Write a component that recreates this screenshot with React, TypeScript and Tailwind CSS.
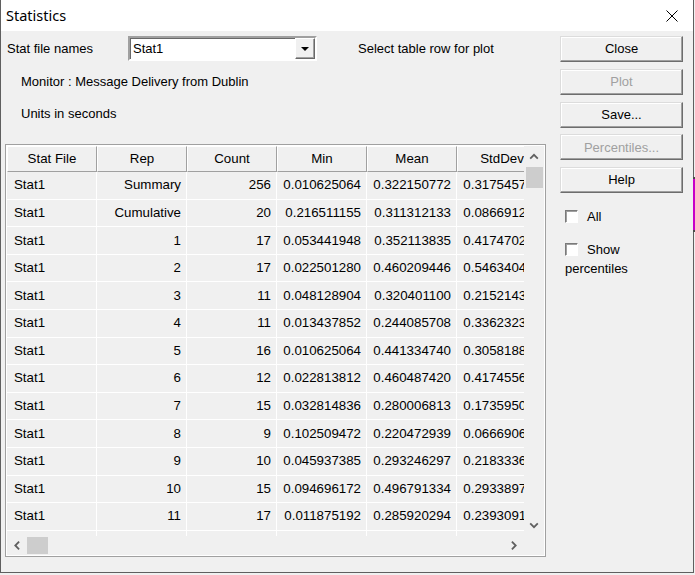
import type { ReactNode } from "react";

type Row = { file: string; rep: string; count: string; min: string; mean: string; std: string };

const rows: Row[] = [
  { file: "Stat1", rep: "Summary", count: "256", min: "0.010625064", mean: "0.322150772", std: "0.317545700" },
  { file: "Stat1", rep: "Cumulative", count: "20", min: "0.216511155", mean: "0.311312133", std: "0.086691200" },
  { file: "Stat1", rep: "1", count: "17", min: "0.053441948", mean: "0.352113835", std: "0.417470200" },
  { file: "Stat1", rep: "2", count: "17", min: "0.022501280", mean: "0.460209446", std: "0.546340400" },
  { file: "Stat1", rep: "3", count: "11", min: "0.048128904", mean: "0.320401100", std: "0.215214300" },
  { file: "Stat1", rep: "4", count: "11", min: "0.013437852", mean: "0.244085708", std: "0.336232300" },
  { file: "Stat1", rep: "5", count: "16", min: "0.010625064", mean: "0.441334740", std: "0.305818800" },
  { file: "Stat1", rep: "6", count: "12", min: "0.022813812", mean: "0.460487420", std: "0.417455600" },
  { file: "Stat1", rep: "7", count: "15", min: "0.032814836", mean: "0.280006813", std: "0.173595000" },
  { file: "Stat1", rep: "8", count: "9", min: "0.102509472", mean: "0.220472939", std: "0.066690600" },
  { file: "Stat1", rep: "9", count: "10", min: "0.045937385", mean: "0.293246297", std: "0.218333600" },
  { file: "Stat1", rep: "10", count: "15", min: "0.094696172", mean: "0.496791334", std: "0.293389700" },
  { file: "Stat1", rep: "11", count: "17", min: "0.011875192", mean: "0.285920294", std: "0.239309100" },
  { file: "", rep: "", count: "", min: "", mean: "", std: "" },
];

const headers = ["Stat File", "Rep", "Count", "Min", "Mean", "StdDev"];

function Chevron({ dir }: { dir: "up" | "down" | "left" | "right" }) {
  const rot = { up: "rotate-0", down: "rotate-180", left: "-rotate-90", right: "rotate-90" }[dir];
  return (
    <svg width="10" height="7" viewBox="0 0 10 7" className={rot}>
      <path d="M1.2 5.6 L5 1.8 L8.8 5.6" fill="none" stroke="#606060" strokeWidth="1.8" />
    </svg>
  );
}

function WinButton({ children, disabled }: { children: ReactNode; disabled?: boolean }) {
  return (
    <button
      type="button"
      className={`flex h-[26px] w-[123px] items-center justify-center border border-t-[#dcdcdc] border-l-[#dcdcdc] border-r-[#6d6d6d] border-b-[#6d6d6d] bg-[#f0f0f0] shadow-[inset_-1px_-1px_0_#a0a0a0,inset_1px_1px_0_#ffffff] ${
        disabled ? "text-[#a0a0a0]" : "text-black"
      }`}
    >
      {children}
    </button>
  );
}

function CheckBox() {
  return (
    <span className="block h-[13px] w-[13px] border border-t-[#7a7a7a] border-l-[#7a7a7a] border-r-white border-b-white bg-white shadow-[inset_1px_1px_0_#a0a0a0]" />
  );
}

const cell = "flex w-[90px] shrink-0 items-center border-r border-b border-white bg-[#f0f0f0]";

function DataTable() {
  return (
    <div className="ml-[-2px] mt-[22px] w-[541px] border border-[#a0a0a0] bg-white p-px">
      <div className="flex">
        <div className="flex w-[517px] flex-col">
          <div className="h-[390px] overflow-hidden text-[13.3px]">
            <div className="w-[540px]">
              <div className="flex h-[26px]">
                {headers.map((h) => (
                  <div
                    key={h}
                    className="flex h-[26px] w-[90px] shrink-0 items-center justify-center border border-t-white border-l-white border-r-[#a0a0a0] border-b-[#a0a0a0] bg-[#f0f0f0]"
                  >
                    {h}
                  </div>
                ))}
              </div>
              {rows.map((r, i) => (
                <div key={i} className="flex h-[27.6px]">
                  <div className={`${cell} pl-[7px]`}>{r.file}</div>
                  <div className={`${cell} justify-end pr-[5px]`}>{r.rep}</div>
                  <div className={`${cell} justify-end pr-[5px]`}>{r.count}</div>
                  <div className={`${cell} justify-end pr-[5px]`}>{r.min}</div>
                  <div className={`${cell} justify-end pr-[5px]`}>{r.mean}</div>
                  <div className={`${cell} justify-end pr-[5px]`}>{r.std}</div>
                </div>
              ))}
            </div>
          </div>
          {/* horizontal scrollbar */}
          <div className="flex h-[19px] items-center bg-[#f0f0f0]">
            <div className="flex h-[19px] w-[20px] items-center justify-center">
              <Chevron dir="left" />
            </div>
            <div className="h-[17px] w-[21px] bg-[#cdcdcd]" />
            <div className="flex-1" />
            <div className="flex h-[19px] w-[20px] items-center justify-center">
              <Chevron dir="right" />
            </div>
          </div>
        </div>
        {/* vertical scrollbar */}
        <div className="flex w-[20px] flex-col bg-[#f0f0f0]">
          <div className="flex h-[21px] items-center justify-center">
            <Chevron dir="up" />
          </div>
          <div className="mx-auto h-[21px] w-[17px] bg-[#cdcdcd]" />
          <div className="flex-1" />
          <div className="flex h-[21px] items-center justify-center">
            <Chevron dir="down" />
          </div>
          <div className="h-[19px] bg-[#f0f0f0]" />
        </div>
      </div>
    </div>
  );
}

export default function App() {
  return (
    <div className="relative h-[575px] w-[695px] bg-[#f0f0f0] font-['Liberation_Sans',Arial,sans-serif] text-[13px] text-black">
      <div className="flex h-[573px] w-[694px] flex-col border-b border-l border-r border-[#5f5f5f] bg-[#f0f0f0]">
        {/* title bar */}
        <div className="flex h-[31px] shrink-0 items-center justify-between bg-white pl-[5px] pr-[15px]">
          <span className="font-['Noto_Sans',sans-serif] text-[14.5px]">Statistics</span>
          <svg width="12" height="12" viewBox="0 0 12 12">
            <path d="M0.5 0.5 L11.5 11.5 M11.5 0.5 L0.5 11.5" stroke="#000" strokeWidth="1" />
          </svg>
        </div>

        <div className="flex flex-1">
          {/* left area */}
          <div className="w-[559px] shrink-0 pl-[6px] pt-[5px]">
            <div className="flex h-[25px] items-center">
              <span className="w-[121px]">Stat file names</span>
              <div className="flex h-[25px] w-[189px] items-center border-2 border-t-[#a0a0a0] border-l-[#a0a0a0] border-r-white border-b-white bg-white shadow-[inset_1px_1px_0_#696969]">
                <span className="flex-1 pl-[3px]">Stat1</span>
                <div className="flex h-[21px] w-[20px] items-center justify-center border border-t-white border-l-white border-r-[#696969] border-b-[#696969] bg-[#f0f0f0] shadow-[inset_-1px_-1px_0_#a0a0a0]">
                  <svg width="8" height="4" viewBox="0 0 8 4">
                    <path d="M0 0 L8 0 L4 4 Z" fill="#000" />
                  </svg>
                </div>
              </div>
              <span className="ml-[41px]">Select table row for plot</span>
            </div>
            <div className="ml-[14px] mt-[13px] h-[16px] leading-[16px]">Monitor : Message Delivery from Dublin</div>
            <div className="ml-[14px] mt-[16px] h-[16px] leading-[16px]">Units in seconds</div>
            <DataTable />
          </div>

          {/* right column */}
          <div className="flex flex-col pt-[5px]">
            <div className="flex flex-col gap-[6.75px]">
              <WinButton>Close</WinButton>
              <WinButton disabled>Plot</WinButton>
              <WinButton>Save...</WinButton>
              <WinButton disabled>Percentiles...</WinButton>
              <WinButton>Help</WinButton>
            </div>
            <label className="ml-[5px] mt-[16px] flex h-[15px] items-center">
              <CheckBox />
              <span className="ml-[9px]">All</span>
            </label>
            <label className="ml-[5px] mt-[18px] flex h-[15px] items-center">
              <CheckBox />
              <span className="ml-[9px]">Show</span>
            </label>
            <span className="ml-[5px] mt-[4px] leading-[16px]">percentiles</span>
          </div>
        </div>
      </div>

      {/* edge of window behind */}
      <div className="absolute left-[693px] top-[177px] h-[55px] w-[2px] border-y-2 border-[#4a4a4a] bg-[#c800c8]" />
    </div>
  );
}
